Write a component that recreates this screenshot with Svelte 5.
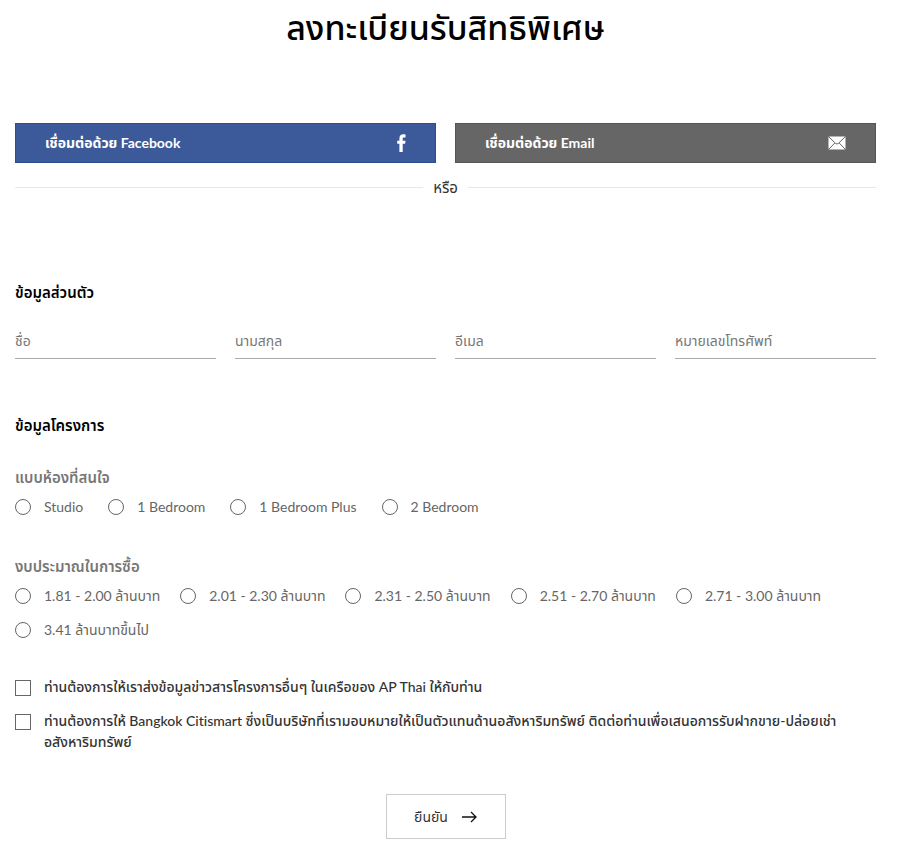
<script>
  let room = $state("");
  let budget = $state("");
  let news = $state(false);
  let agent = $state(false);

  const fields = [
    { name: "firstname", type: "text", label: "ชื่อ" },
    { name: "lastname", type: "text", label: "นามสกุล" },
    { name: "email", type: "email", label: "อีเมล" },
    { name: "phone", type: "tel", label: "หมายเลขโทรศัพท์" },
  ];

  const rooms = ["Studio", "1 Bedroom", "1 Bedroom Plus", "2 Bedroom"];

  const budgets = [
    "1.81 - 2.00 ล้านบาท",
    "2.01 - 2.30 ล้านบาท",
    "2.31 - 2.50 ล้านบาท",
    "2.51 - 2.70 ล้านบาท",
    "2.71 - 3.00 ล้านบาท",
    "3.41 ล้านบาทขึ้นไป",
  ];

  function submit(e) {
    e.preventDefault();
  }
</script>

<main class="register">
  <h1>ลงทะเบียนรับสิทธิพิเศษ</h1>

  <div class="social">
    <button type="button" class="social-btn facebook">
      เชื่อมต่อด้วย Facebook
      <svg width="9" height="20" viewBox="4 0 9 20" aria-hidden="true">
        <path
          fill="#fff"
          d="M6.4 19v-8.2H4.2V7.7h2.2V5.4C6.4 2.7 8 1.3 10.3 1.3c.9 0 1.9.1 2.2.2v2.9h-1.4c-1 0-1.4.5-1.4 1.4v1.9h2.8l-.4 3.1H9.7V19z"
        />
      </svg>
    </button>
    <button type="button" class="social-btn email">
      เชื่อมต่อด้วย Email
      <svg width="18" height="20" viewBox="0 0 18 20" aria-hidden="true">
        <rect x="0.5" y="3.5" width="17" height="13" rx="1" fill="#fff" />
        <path
          d="M1 4l6.6 6.4q1.4 1.2 2.8 0L17 4M1 16l5.8-6M17 16l-5.8-6"
          fill="none"
          stroke="#666"
          stroke-width="1"
        />
      </svg>
    </button>
  </div>

  <div class="or"><span>หรือ</span></div>

  <form onsubmit={submit}>
    <h2>ข้อมูลส่วนตัว</h2>
    <div class="fields">
      {#each fields as field}
        <input
          type={field.type}
          name={field.name}
          placeholder={field.label}
          aria-label={field.label}
        />
      {/each}
    </div>

    <h2 class="project">ข้อมูลโครงการ</h2>

    <fieldset class="rooms">
      <legend>แบบห้องที่สนใจ</legend>
      <div class="options">
        {#each rooms as item}
          <label class="option">
            <input type="radio" name="room" value={item} bind:group={room} />
            {item}
          </label>
        {/each}
      </div>
    </fieldset>

    <fieldset class="budgets">
      <legend>งบประมาณในการซื้อ</legend>
      <div class="options">
        {#each budgets as item}
          <label class="option">
            <input type="radio" name="budget" value={item} bind:group={budget} />
            {item}
          </label>
        {/each}
      </div>
    </fieldset>

    <div class="consents">
      <label class="consent">
        <input type="checkbox" bind:checked={news} />
        <span>ท่านต้องการให้เราส่งข้อมูลข่าวสารโครงการอื่นๆ ในเครือของ AP Thai ให้กับท่าน</span>
      </label>
      <label class="consent">
        <input type="checkbox" bind:checked={agent} />
        <span>
          ท่านต้องการให้ Bangkok Citismart ซึ่งเป็นบริษัทที่เรามอบหมายให้เป็นตัวแทนด้านอสังหาริมทรัพย์
          ติดต่อท่านเพื่อเสนอการรับฝากขาย-ปล่อยเช่าอสังหาริมทรัพย์
        </span>
      </label>
    </div>

    <button type="submit" class="confirm">
      ยืนยัน
      <svg width="16" height="12" viewBox="0 0 16 12" aria-hidden="true">
        <path d="M1 6h14M10 1l5 5-5 5" fill="none" stroke="#111" stroke-width="1.3" />
      </svg>
    </button>
  </form>
</main>

<style>
  :global(body) {
    margin: 0;
    background: #fff;
  }

  .register {
    padding: 3px 24px 11px 15px;
    font-family: Lato, "Noto Sans Thai", "Noto Sans", sans-serif;
    font-size: 14px;
    line-height: 24px;
    font-variant-ligatures: no-common-ligatures;
    color: #333;
  }

  input,
  button {
    font: inherit;
    box-sizing: border-box;
  }

  h1 {
    margin: 0 0 72px;
    font-size: 34px;
    font-weight: 500;
    line-height: 48px;
    text-align: center;
    color: #000;
  }

  h2 {
    margin: 0;
    font-size: 15px;
    font-weight: 600;
    line-height: 24px;
    color: #000;
  }

  .social {
    display: grid;
    grid-template-columns: 1fr 1fr;
    gap: 19px;
  }

  .social-btn {
    display: flex;
    align-items: center;
    justify-content: space-between;
    height: 40px;
    padding: 0 29px;
    border: 1px solid #2d4c8f;
    background: #3c5a99;
    color: #fff;
    font-weight: 700;
    cursor: pointer;
  }

  .social-btn.email {
    border-color: #555;
    background: #666;
  }

  .or {
    display: flex;
    align-items: center;
    gap: 10px;
    margin: 12px 0 81px;
    font-size: 15px;
  }

  .or::before,
  .or::after {
    content: "";
    flex: 1;
    height: 1px;
    background: #e8e8e8;
  }

  .fields {
    display: grid;
    grid-template-columns: repeat(4, 1fr);
    gap: 19px;
    margin-top: 15px;
  }

  .fields input {
    width: 100%;
    height: 40px;
    padding: 4px 0 0;
    border: 0;
    border-bottom: 1px solid #aaa;
    border-radius: 0;
    background: transparent;
    color: #333;
    outline: none;
  }

  .fields input:focus {
    border-bottom-color: #333;
  }

  .fields input::placeholder {
    color: #777;
    opacity: 1;
  }

  .project {
    margin-top: 54px;
  }

  fieldset {
    margin: 0;
    padding: 0;
    border: 0;
    min-width: 0;
  }

  legend {
    padding: 0;
    margin-bottom: 6px;
    font-size: 15px;
    font-weight: 600;
    color: #777;
  }

  .rooms {
    margin-top: 28px;
  }

  .budgets {
    margin-top: 35px;
  }

  .options {
    display: flex;
    flex-wrap: wrap;
    gap: 10px 20px;
  }

  .rooms .options {
    column-gap: 25px;
  }

  .option {
    display: flex;
    align-items: center;
    gap: 13px;
    color: #666;
    cursor: pointer;
  }

  input[type="radio"],
  input[type="checkbox"] {
    appearance: none;
    flex: none;
    width: 16px;
    height: 16px;
    margin: 0;
    border: 1px solid #666;
    background: #fff;
  }

  input[type="radio"] {
    border-radius: 50%;
  }

  input[type="radio"]:checked,
  input[type="checkbox"]:checked {
    background: #333;
    box-shadow: inset 0 0 0 3px #fff;
  }

  .consents {
    display: grid;
    gap: 13px;
    margin-top: 34px;
  }

  .consent {
    display: flex;
    gap: 13px;
    font-weight: 500;
    line-height: 21px;
    cursor: pointer;
  }

  .consent input {
    margin-top: 4px;
  }

  .confirm {
    display: flex;
    align-items: center;
    justify-content: center;
    gap: 13px;
    width: 120px;
    height: 45px;
    margin: 42px auto 0;
    padding: 0;
    border: 1px solid #ccc;
    background: #fff;
    color: #333;
    cursor: pointer;
  }
</style>
